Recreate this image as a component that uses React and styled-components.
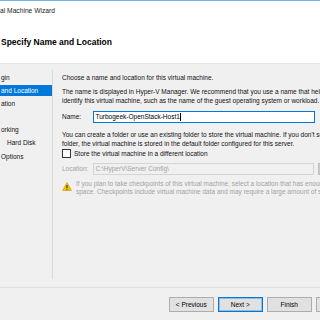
import React from "react"
import styled, { createGlobalStyle } from "styled-components"

const GlobalStyle = createGlobalStyle`
  html, body {
    margin: 0;
    padding: 0;
    width: 320px;
    height: 320px;
    overflow: hidden;
    background: #f0f0f0;
  }
`

const Window = styled.div`
  width: 372px;
  height: 320px;
  box-sizing: border-box;
  display: flex;
  flex-direction: column;
  background: #f0f0f0;
  border-top: 1px solid #72b1e6;
  font-family: "Liberation Sans", Arial, sans-serif;
  font-size: 6.5px;
  color: #111;
`

const Top = styled.div`
  height: 62px;
  flex-shrink: 0;
  background: #fff;
  border-bottom: 1px solid #e3e3e3;
`

const TitleBar = styled.div`
  height: 20px;
  box-sizing: border-box;
  padding-top: 5px;
  line-height: 9px;
  font-size: 6.7px;
  color: #222;
`

const Heading = styled.h1`
  margin: 15.5px 0 0 1px;
  font-size: 8.5px;
  line-height: 11px;
  font-weight: bold;
  color: #000;
`

const Body = styled.div`
  flex: 1;
  display: flex;
  min-height: 0;
`

const Nav = styled.ul`
  list-style: none;
  width: 52px;
  margin: 6px 0 8px 0;
  padding: 1.5px 0 0 0;
  border-right: 1px solid #dadada;
  display: flex;
  flex-direction: column;
  gap: 2.2px;
`

const NavItem = styled.li`
  height: 11px;
  line-height: 11px;
  padding-left: ${({ $indent }) => $indent || 1}px;
  white-space: nowrap;
  overflow: hidden;
  background: ${({ $active }) => ($active ? "#0078d7" : "transparent")};
  color: ${({ $active }) => ($active ? "#fff" : "#111")};
`

const Content = styled.div`
  flex: 1;
  padding: 8.5px 0 0 9px;
  display: flex;
  flex-direction: column;
`

const Para = styled.div`
  margin-top: ${({ $gap }) => $gap || 0}px;
  line-height: 9px;
  white-space: nowrap;
  color: ${({ $muted }) => ($muted ? "#a3a3a3" : "#111")};
`

const Row = styled.div`
  display: flex;
  align-items: center;
  margin-top: ${({ $gap }) => $gap || 0}px;
  height: ${({ $h }) => $h}px;
`

const Label = styled.span`
  width: 31px;
  flex-shrink: 0;
  color: ${({ $muted }) => ($muted ? "#a3a3a3" : "#111")};
`

const TextBox = styled.div`
  box-sizing: border-box;
  width: ${({ $w }) => $w}px;
  height: 12px;
  padding-left: 1.5px;
  display: flex;
  align-items: center;
  border: 1px solid ${({ $disabled }) => ($disabled ? "#d4d4d4" : "#0078d7")};
  background: ${({ $disabled }) => ($disabled ? "#f0f0f0" : "#fff")};
  color: ${({ $disabled }) => ($disabled ? "#a3a3a3" : "#000")};
  white-space: nowrap;
`

const Caret = styled.span`
  display: inline-block;
  width: 1px;
  height: 8px;
  margin-left: 0.5px;
  background: #000;
`

const SideButton = styled.div`
  box-sizing: border-box;
  width: 45px;
  height: 12px;
  margin-left: 4px;
  border: 1px solid #bfbfbf;
  background: #cccccc;
  color: #a3a3a3;
  text-align: center;
  line-height: 10px;
`

const Check = styled.span`
  box-sizing: border-box;
  width: 9px;
  height: 9px;
  border: 1px solid #333;
  background: #fff;
  margin-right: 3px;
  flex-shrink: 0;
`

const Warning = styled.div`
  display: flex;
  margin-top: 5px;
`

const WarnIcon = styled.svg`
  width: 10px;
  height: 9px;
  margin: 2px 4px 0 0;
  flex-shrink: 0;
`

const WarnText = styled.div`
  line-height: 8px;
  white-space: nowrap;
  color: #a3a3a3;
`

const Footer = styled.div`
  height: 33px;
  flex-shrink: 0;
  box-sizing: border-box;
  border-top: 1px solid #dfdfdf;
  padding: 9px 0 0 169px;
  display: flex;
  gap: 4.5px;
`

const Button = styled.div`
  box-sizing: border-box;
  width: 44.5px;
  height: 15px;
  flex-shrink: 0;
  border: 1px solid ${({ $primary }) => ($primary ? "#0078d7" : "#adadad")};
  box-shadow: ${({ $primary }) =>
    $primary ? "inset 0 0 0 1px rgba(0, 120, 215, 0.35)" : "none"};
  background: #e1e1e1;
  color: #000;
  text-align: center;
  line-height: 13px;
`

const steps = [
  { label: "gin" },
  { label: "and Location", active: true },
  { label: "ation" },
  { label: "" },
  { label: "orking" },
  { label: "Hard Disk", indent: 7 },
  { label: "Options" },
  { label: "" },
]

export default function App() {
  return (
    <>
      <GlobalStyle />
      <Window>
        <Top>
          <TitleBar>al Machine Wizard</TitleBar>
          <Heading>Specify Name and Location</Heading>
        </Top>
        <Body>
          <Nav>
            {steps.map((s, i) => (
              <NavItem key={i} $active={s.active} $indent={s.indent}>
                {s.label}
              </NavItem>
            ))}
          </Nav>
          <Content>
            <Para>Choose a name and location for this virtual machine.</Para>
            <Para $gap={5.7}>
              The name is displayed in Hyper-V Manager. We recommend that you use a name that helps you easily
              <br />
              identify this virtual machine, such as the name of the guest operating system or workload.
            </Para>
            <Row $gap={5.8} $h={12}>
              <Label>Name:</Label>
              <TextBox $w={222}>
                Turbogeek-OpenStack-Host1
                <Caret />
              </TextBox>
            </Row>
            <Para $gap={6.8}>
              You can create a folder or use an existing folder to store the virtual machine. If you don't select a
              <br />
              folder, the virtual machine is stored in the default folder configured for this server.
            </Para>
            <Row $gap={1.7} $h={9}>
              <Check />
              <span>Store the virtual machine in a different location</span>
            </Row>
            <Row $gap={4.5} $h={12}>
              <Label $muted>Location:</Label>
              <TextBox $w={221} $disabled>
                {"C:\\HyperV\\Server Config\\"}
              </TextBox>
              <SideButton>Browse...</SideButton>
            </Row>
            <Warning>
              <WarnIcon viewBox="0 0 20 18">
                <path d="M10 1 L19 17 L1 17 Z" fill="#f5c400" stroke="#b88a00" strokeWidth="1" />
                <rect x="9" y="6" width="2" height="6" fill="#222" />
                <rect x="9" y="13.5" width="2" height="2" fill="#222" />
              </WarnIcon>
              <WarnText>
                If you plan to take checkpoints of this virtual machine, select a location that has enough free
                <br />
                space. Checkpoints include virtual machine data and may require a large amount of space.
              </WarnText>
            </Warning>
          </Content>
        </Body>
        <Footer>
          <Button>&lt; Previous</Button>
          <Button $primary>Next &gt;</Button>
          <Button>Finish</Button>
          <Button>Cancel</Button>
        </Footer>
      </Window>
    </>
  )
}
